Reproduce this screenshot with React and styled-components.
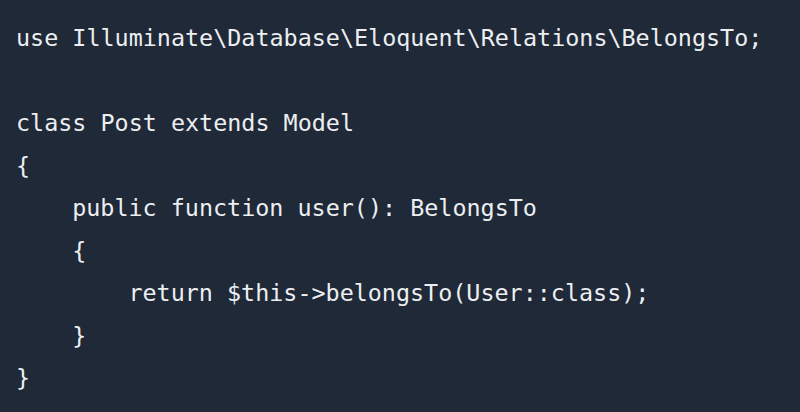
import React from "react";
import styled, { createGlobalStyle } from "styled-components";

const GlobalStyle = createGlobalStyle`
  html, body {
    margin: 0;
    padding: 0;
    background: #1f2937;
  }
`;

const CodeBlock = styled.pre`
  margin: 0;
  width: 800px;
  height: 412px;
  box-sizing: border-box;
  padding: 17px 16px 0;
  background: #1f2937;
  color: #eceef1;
  font-family: "DejaVu Sans Mono", "Liberation Mono", monospace;
  font-size: 23.4px;
  line-height: 42.5px;
  overflow: hidden;
`;

const Line = styled.div`
  height: 42.5px;
  white-space: pre;
  padding-left: ${({ $level }) => ($level || 0) * 4 * 14.05}px;
`;

const lines = [
  [0, "use Illuminate\\Database\\Eloquent\\Relations\\BelongsTo;"],
  [0, ""],
  [0, "class Post extends Model"],
  [0, "{"],
  [1, "public function user(): BelongsTo"],
  [1, "{"],
  [2, "return $this->belongsTo(User::class);"],
  [1, "}"],
  [0, "}"],
];

const App = () => {
  return (
    <>
      <GlobalStyle />
      <CodeBlock>
        {lines.map(([level, text], i) => (
          <Line key={i} $level={level}>
            {text}
          </Line>
        ))}
      </CodeBlock>
    </>
  );
};

export default App;
